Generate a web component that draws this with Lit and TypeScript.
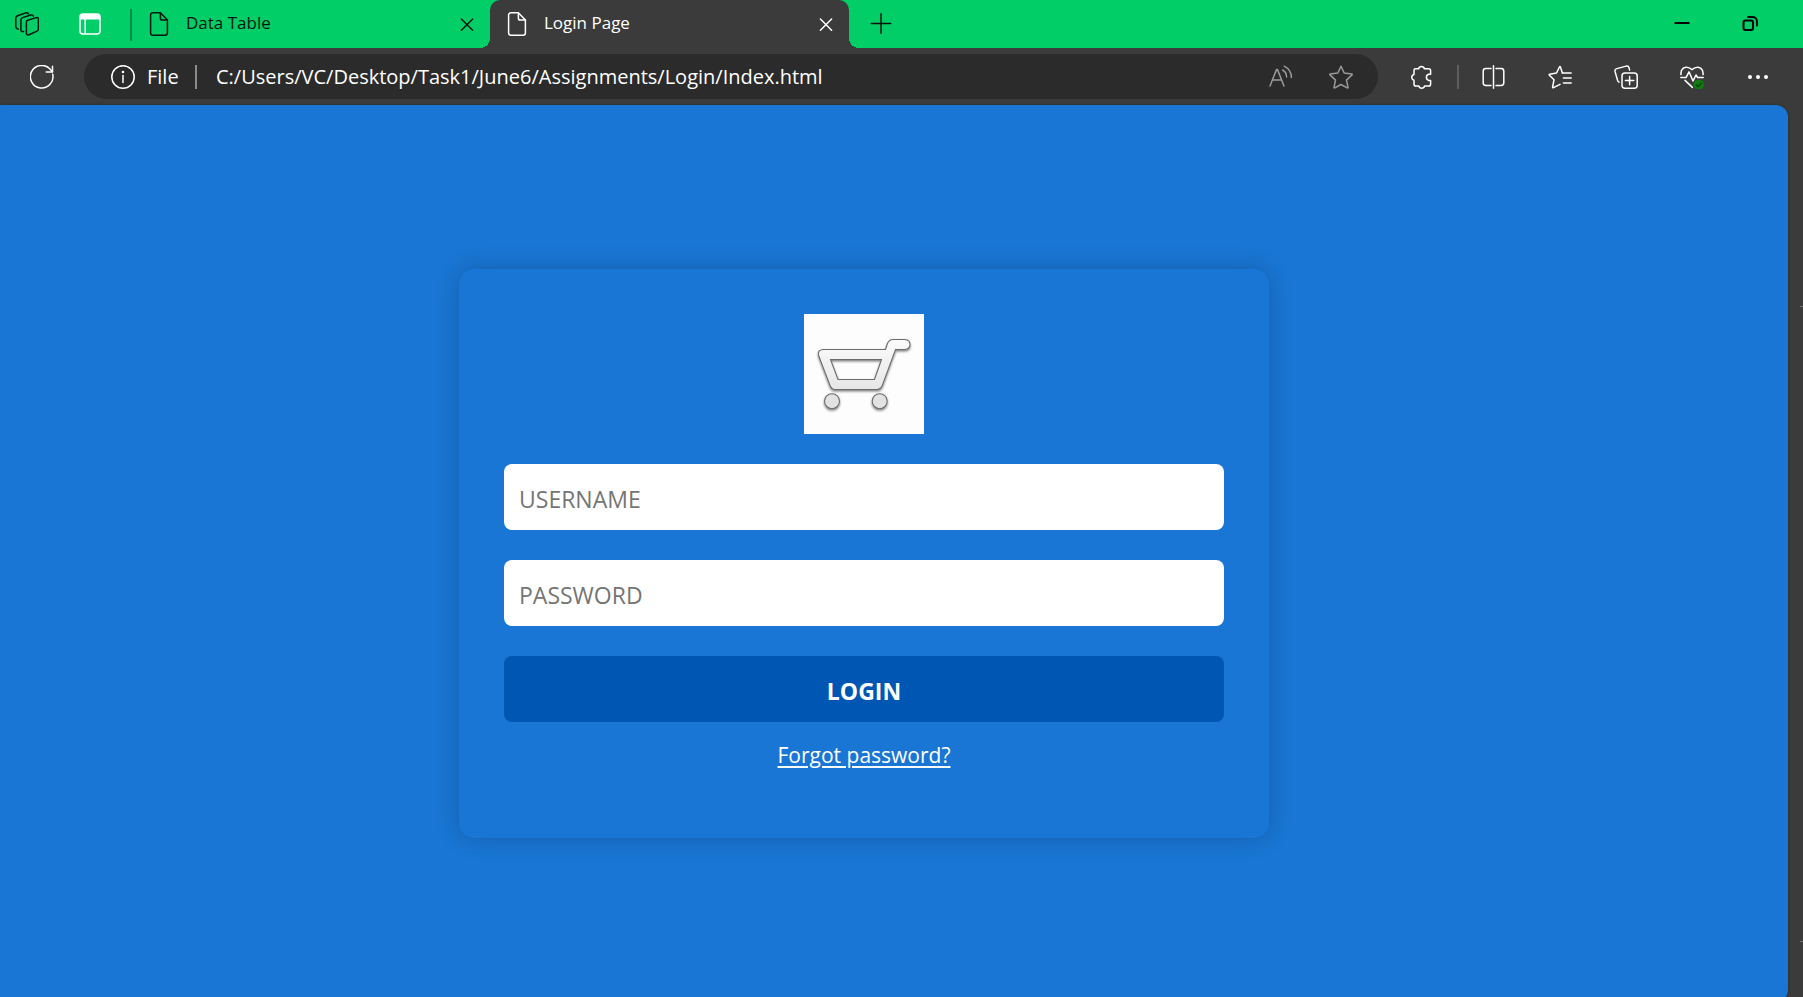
import { LitElement, html, css, svg } from "lit";
import { customElement } from "lit/decorators.js";

const icon = (body: unknown, cls = "icon") => html`
  <svg class=${cls} viewBox="0 0 24 24" width="24" height="24" fill="none"
    stroke="currentColor" stroke-width="1.5" stroke-linecap="round" stroke-linejoin="round"
    aria-hidden="true">${body}</svg>`;

const workspaces = svg`
  <path d="M12.6 8.2 21.4 5.6Q23.4 5 23.4 7V17Q23.4 18.6 22 19.1L14 22.8Q11.4 23.6 11.4 21V10Q11.4 8.6 12.6 8.2Z"/>
  <path d="M8.6 19.6 7.4 19.6Q5.9 19.4 5.9 17.9V8Q5.9 6.2 7.5 5.6L15.6 3Q18.2 2.6 18.4 4.4"/>
  <path d="M3.2 17.2 2 16.6Q.8 16 .8 14.6V6.4Q.8 4.4 2.4 3.8L10.4 1Q13 .4 13.4 1.8"/>`;
const sideTabs = svg`
  <rect x="2" y="2" width="20" height="20" rx="3"/>
  <path d="M2 7.6V5Q2 2 5 2H19Q22 2 22 5V7.6Z" fill="currentColor" stroke="none"/>
  <path d="M7.2 7V22" stroke-linecap="butt"/>`;
const file = svg`
  <path d="M6 .8H13.4L20.4 8V21Q20.4 23.2 18.2 23.2H5.8Q3.6 23.2 3.6 21V3Q3.6.8 6 .8Z"/>
  <path d="M13.4 1V6.2Q13.4 8 15.2 8H20.2"/>`;
const cross = svg`<path d="M6.4 7 17.6 18.2M17.6 7 6.4 18.2"/>`;
const plus = svg`<path d="M12 1.8V21.2M2.3 11.5H21.7"/>`;
const minimize = svg`<path d="M4.5 11H19.5" stroke-width="2" stroke-linecap="butt"/>`;
const restore = svg`
  <rect x="4.5" y="8.5" width="9.5" height="9.5" rx="2" stroke-width="2"/>
  <path d="M9 5H13Q18 5 18 10V13.5" stroke-width="1.8"/>`;
const refresh = svg`
  <path d="M22.7 9.2A11.3 11.3 0 1 1 20.2 4.3L22.4 6.8"/>
  <path d="M22.5 1.2V7H16.2"/>`;
const info = svg`
  <circle cx="12" cy="12" r="11.2"/>
  <path d="M12 10.6V17.4"/><circle cx="12" cy="7" r=".6" fill="currentColor"/>`;
const readAloud = svg`
  <path d="M1 21 7.6 4.4H8.4L15 21M3.4 15H12.6"/>
  <path d="M13.6 5Q17.6 7.2 17.6 12M15.2 1.2Q22.4 5 22.4 12.4"/>`;
const star = svg`
  <path d="M12 1.3 15.2 8 22.8 9Q23.5 9.3 23 9.9L17.5 15.1 19 22.4Q19 23.2 18.2 22.9L12 19.5 5.8 22.9Q5 23.2 5 22.4L6.5 15.1 1 9.9Q.5 9.3 1.2 9L8.8 8Z"/>`;
const puzzle = svg`
  <path d="M5.4 3.8H8.6A3 3 0 0 1 14.4 3.8H18.6Q20.6 3.8 20.6 5.8V9.2H18.8A3.2 3.2 0 0 0 18.8 15.4H20.6V19.2Q20.6 21 18.8 21H14.6A3 3 0 0 1 8.8 21H6Q4 21 4 19.2V15.2A3 3 0 0 1 4 9.4V5.2Q4 3.8 5.4 3.8Z"/>`;
const split = svg`
  <path d="M9 3.6H3.8Q1.2 3.6 1.2 6.2V17.8Q1.2 20.4 3.8 20.4H9M14 3.6H19.2Q21.8 3.6 21.8 6.2V17.8Q21.8 20.4 19.2 20.4H14M11.5 .8V23.2"/>`;
const favourites = svg`
  <path d="M14.4 8 12.4 1.9Q12 1 11.5 1.9L8.5 8 1.6 9.2Q.8 9.5 1.4 10.2L6 14.8 4.6 22Q4.6 23 5.5 22.7L12 19.4"/>
  <path d="M14.5 8H23.2M15.4 13H23.2M15.4 18H23.2"/>`;
const collections = svg`
  <rect x="8" y="8" width="15.2" height="15.2" rx="3"/>
  <path d="M15.6 11.4V19.8M11.4 15.6H19.8"/>
  <path d="M15.6 5 15 2.8Q14.4.6 12.2 1.1L2.8 3.6Q.6 4.2 1 6.4L3.4 14.8Q3.8 16.6 5 17.2"/>`;
const heart = svg`
  <path d="M1 9.6Q.4 5.4 3.4 3.2 7.4.6 12 4.6 16.6.6 20.6 3.2 23.6 5.4 23 9.6"/>
  <path d="M.8 12.6H6L9 6.8 13 16 16 10 17.6 12.6H23.2M5 15.4 12.4 22.4"/>
  <circle cx="18.8" cy="19.8" r="5.2" fill="#0f7b10" stroke="none"/>
  <path d="M16.4 20 18.2 21.8 21.4 18.2" stroke="#064a08" stroke-width="1.4"/>`;
const dots = svg`
  <g fill="currentColor" stroke="none"><circle cx="4" cy="12" r="2"/><circle cx="12" cy="12" r="2"/><circle cx="20" cy="12" r="2"/></g>`;

const base = css`
  * { box-sizing: border-box; }
  button {
    display: flex; align-items: center; justify-content: center;
    padding: 0; border: 0; background: none; color: inherit; font: inherit; cursor: pointer;
  }
  svg { display: block; flex: none; }
`;

@customElement("tab-strip")
export class TabStrip extends LitElement {
  static styles = [base, css`
    :host { display: flex; height: 48px; background: #02ce68; color: #07160d; font-size: 17px; }
    .tools { display: flex; align-items: center; gap: 39px; padding-left: 15px; width: 132px; border-right: 2px solid #048e4b;
      border-image: linear-gradient(#02ce68 10px, #048e4b 10px 40px, #02ce68 40px) 1; }
    .light { color: #fff; }
    .tab { position: relative; display: flex; align-items: center; gap: 15px; width: 358px; padding: 0 11px 0 15px; }
    .title { flex: 1; line-height: 24px; padding-bottom: 2px; }
    .active { width: 359px; background: #3b3b3b; color: #fff; border-radius: 10px 10px 0 0; }
    .active::before, .active::after { content: ""; position: absolute; bottom: 0; width: 10px; height: 10px; }
    .active::before { right: 100%; background: radial-gradient(circle at 0 0, transparent 10px, #3b3b3b 10px); }
    .active::after { left: 100%; background: radial-gradient(circle at 100% 0, transparent 10px, #3b3b3b 10px); }
    .new { width: 24px; margin-left: 20px; }
    .window { display: flex; gap: 45px; margin-left: auto; padding-right: 40px; color: #000; }
  `];

  render() {
    return html`
      <div class="tools">
        <button aria-label="Workspaces">${icon(workspaces)}</button>
        <button class="light" aria-label="Tab actions menu">${icon(sideTabs)}</button>
      </div>
      <div class="tab">
        ${icon(file)}<span class="title">Data Table</span>
        <button aria-label="Close tab">${icon(cross)}</button>
      </div>
      <div class="tab active">
        ${icon(file)}<span class="title">Login Page</span>
        <button aria-label="Close tab">${icon(cross)}</button>
      </div>
      <button class="new" aria-label="New tab">${icon(plus)}</button>
      <div class="window">
        <button aria-label="Minimize">${icon(minimize)}</button>
        <button aria-label="Restore">${icon(restore)}</button>
      </div>`;
  }
}

@customElement("address-toolbar")
export class AddressToolbar extends LitElement {
  static styles = [base, css`
    :host { display: flex; align-items: center; height: 57px; padding: 0 12px 0 30px; background: #3b3b3b; color: #fff; font-size: 20px; }
    .pill { display: flex; align-items: center; flex: 1; height: 45px; margin: 0 11px 0 30px; padding: 0 25px 0 27px; border-radius: 23px; background: #2b2b2b; }
    .site { gap: 12px; width: 84px; justify-content: flex-start; }
    .rule { width: 2px; height: 24px; background: #8b8b8b; }
    .url { flex: 1; min-width: 0; height: 30px; margin-left: 19px; padding: 0; border: 0; outline: 0; background: none; color: #fff; font: inherit; }
    .dim { display: flex; gap: 36px; color: #9a9a9a; }
    .action { width: 66px; height: 45px; }
    .faint { margin: 0 2px; background: #5e5e5e; }
  `];

  render() {
    return html`
      <button aria-label="Refresh">${icon(refresh)}</button>
      <div class="pill">
        <button class="site">${icon(info)}<span>File</span></button>
        <span class="rule"></span>
        <input class="url" aria-label="Address" value="C:/Users/VC/Desktop/Task1/June6/Assignments/Login/Index.html" />
        <div class="dim">
          <button aria-label="Read aloud">${icon(readAloud)}</button>
          <button aria-label="Add to favorites">${icon(star)}</button>
        </div>
      </div>
      <button class="action" aria-label="Extensions">${icon(puzzle)}</button>
      <span class="rule faint"></span>
      <button class="action" aria-label="Split screen">${icon(split)}</button>
      <button class="action" aria-label="Favorites">${icon(favourites)}</button>
      <button class="action" aria-label="Collections">${icon(collections)}</button>
      <button class="action" aria-label="Browser essentials">${icon(heart)}</button>
      <button class="action" aria-label="Settings and more">${icon(dots)}</button>`;
  }
}

@customElement("login-card")
export class LoginCard extends LitElement {
  static styles = [base, css`
    :host { display: block; width: 100%; max-width: 810px; }
    .card { display: flex; flex-direction: column; align-items: center; gap: 30px; padding: 45px 45px 68px; border-radius: 15px;
      background: #1976d4; box-shadow: 0 0 23px rgba(0, 0, 0, 0.2); }
    .logo { background: #fdfdfd; }
    .field, .login { width: 100%; height: 66px; border: 0; border-radius: 8px; font: inherit; font-size: 23px; }
    .field { padding: 3px 15px 0; background: #fff; color: #222; outline: 0; }
    .field::placeholder { color: #757575; opacity: 1; }
    .login { padding-top: 3px; background: #0056b3; color: #fff; font-weight: 700; }
    .forgot { margin-top: -12px; color: #fff; font-size: 21px; line-height: 30px; text-underline-offset: 3px; text-decoration-thickness: 2px; }
  `];

  render() {
    return html`
      <form class="card" @submit=${(e: Event) => e.preventDefault()}>
        <svg class="logo" viewBox="0 0 120 120" width="120" height="120" role="img" aria-label="Shopping cart">
          <defs>
            <linearGradient id="metal" x1="0" y1="0" x2="0" y2="1">
              <stop offset="0" stop-color="#fcfcfc"/><stop offset="1" stop-color="#e6e6e6"/>
            </linearGradient>
            <filter id="drop" x="-10%" y="-10%" width="120%" height="130%">
              <feDropShadow dx="0" dy="1.5" stdDeviation="1" flood-color="#000" flood-opacity=".5"/>
            </filter>
          </defs>
          <g fill="url(#metal)" stroke="#6c6c6c" stroke-width="1.1" filter="url(#drop)">
            <path fill-rule="evenodd" d="M19 35.5H81.5L83.5 29.5Q85.2 25.5 89 25.5H101Q106 26 106 30.5 106 35 101 35.5H91.5L78.5 71Q77 75.5 73 75.5H31Q27.5 75.5 26 71.5L14.8 42Q13 36 19 35.5ZM26.5 45.5 34 65.5H70.5L77.5 45.5Z"/>
            <g fill="#e2e2e2"><circle cx="28" cy="87.2" r="7.5"/><circle cx="75.7" cy="87.2" r="7.5"/></g>
          </g>
        </svg>
        <input class="field" type="text" placeholder="USERNAME" aria-label="USERNAME" />
        <input class="field" type="password" placeholder="PASSWORD" aria-label="PASSWORD" />
        <button class="login" type="submit">LOGIN</button>
        <a class="forgot" href="#">Forgot password?</a>
      </form>`;
  }
}

@customElement("app-root")
export class AppRoot extends LitElement {
  static styles = [base, css`
    :host { display: flex; flex-direction: column; height: 100vh; overflow: hidden; background: #3b3b3b;
      font-family: "Open Sans", "Noto Sans", sans-serif; }
    .body { display: flex; flex: 1; margin-bottom: -5px; }
    .page { display: flex; flex: 1; align-items: center; justify-content: center; padding-right: 60px;
      border-radius: 0 12px 12px 0; background: #1976d4; box-shadow: 0 0 3px rgba(0, 0, 0, 0.3); }
    .edge { display: flex; flex-direction: column; justify-content: space-between; align-items: flex-end; width: 15px; padding: 201px 0 60px; }
    .mark { width: 3px; height: 1px; background: #757575; }
  `];

  render() {
    return html`
      <tab-strip></tab-strip>
      <address-toolbar></address-toolbar>
      <div class="body">
        <main class="page"><login-card></login-card></main>
        <div class="edge"><span class="mark"></span><span class="mark"></span></div>
      </div>`;
  }
}
